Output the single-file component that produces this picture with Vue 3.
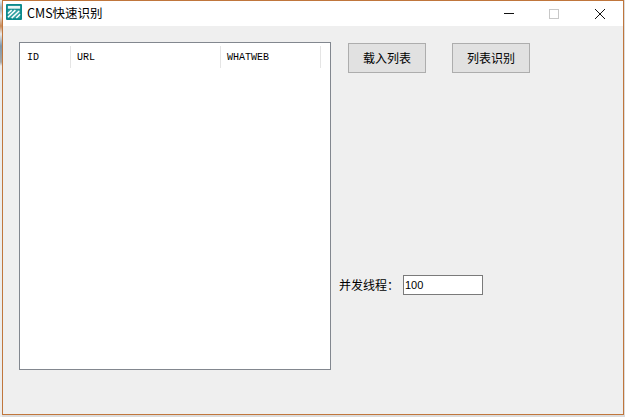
<script setup>
const columns = [
  { label: 'ID', width: 50 },
  { label: 'URL', width: 150 },
  { label: 'WHATWEB', width: 100 },
]
</script>

<template>
  <div class="screen">
    <div class="window">
      <header class="titlebar">
        <svg class="logo" width="16" height="16" viewBox="0 0 17 17">
          <rect x="0" y="0" width="17" height="17" rx="1" fill="#0b8a8c" />
          <rect x="2" y="2" width="13" height="3" fill="#e9f6f6" />
          <rect x="2" y="6" width="13" height="9" fill="#35a3a4" />
          <path d="M2 10 L6 6.5 M2 14 L10 6.5 M6 15 L14 7.5 M11 15 L15 11" stroke="#fff" stroke-width="1.5" fill="none" />
        </svg>
        <span class="title">CMS快速识别</span>
        <div class="controls">
          <span class="ctl"><i class="min"></i></span>
          <span class="ctl"><i class="max"></i></span>
          <span class="ctl">
            <svg width="12" height="12" viewBox="0 0 12 12">
              <path d="M1 1 L11 11 M11 1 L1 11" stroke="#111" stroke-width="1" fill="none" />
            </svg>
          </span>
        </div>
      </header>
      <main class="body">
        <section class="table">
          <div class="thead">
            <div v-for="c in columns" :key="c.label" class="th" :style="{ width: c.width + 'px' }">{{ c.label }}</div>
          </div>
        </section>
        <aside class="side">
          <div class="buttons">
            <button class="btn">载入列表</button>
            <button class="btn">列表识别</button>
          </div>
          <div class="thread">
            <span class="label">并发线程：</span>
            <input class="input" value="100" />
          </div>
        </aside>
      </main>
    </div>
  </div>
</template>

<style scoped>
.screen {
  width: 625px;
  height: 417px;
  box-sizing: border-box;
  padding: 0 1px 1px 2px;
  background:
    linear-gradient(to bottom, #f0f0f0 0, #9db0bd 8px, #e2e2e2 16px, #c98b5a 26px, #e9e9e9 34px, #7f98ad 46px, #a8a8a8 62px, #ececec 66px) left top / 2px 100% no-repeat,
    #dcdcdc;
  overflow: hidden;
}
.window {
  height: 415px;
  box-sizing: border-box;
  border: 1px solid #c0763c;
  display: flex;
  flex-direction: column;
  background: #efefef;
}
.titlebar {
  height: 25px;
  flex: none;
  background: #fff;
  display: flex;
  align-items: center;
  padding-left: 3px;
}
.logo {
  flex: none;
  margin-bottom: 3px;
}
.title {
  margin-left: 5px;
  padding-bottom: 3px;
  font: 12.5px "Noto Sans CJK SC", "Liberation Sans", sans-serif;
  color: #000;
}
.controls {
  margin-left: auto;
  display: flex;
}
.ctl {
  width: 46px;
  height: 25px;
  display: flex;
  align-items: center;
  justify-content: center;
}
.min {
  width: 10px;
  height: 1px;
  margin-left: 2px;
  background: #111;
}
.max {
  width: 8px;
  height: 8px;
  border: 1px solid #c8c8c8;
}
.body {
  flex: 1;
  display: flex;
  padding: 16px 0 0 16px;
}
.table {
  width: 312px;
  height: 328px;
  box-sizing: border-box;
  border: 1px solid #82878f;
  background: #fff;
  padding: 3px 0 0 1px;
  flex: none;
}
.thead {
  display: flex;
  height: 22px;
}
.th {
  box-sizing: border-box;
  border-right: 1px solid #e5e5e5;
  padding: 1px 0 0 6px;
  font: 10px/22px "Liberation Mono", monospace;
  color: #000;
}
.side {
  flex: 1;
  display: flex;
  flex-direction: column;
  padding-left: 8px;
}
.buttons {
  display: flex;
  gap: 26px;
  padding: 1px 0 0 9px;
}
.btn {
  width: 78px;
  height: 30px;
  box-sizing: border-box;
  border: 1px solid #adadad;
  background: #e1e1e1;
  color: #000;
  padding: 0 0 1px;
  font: 12px "Noto Sans CJK SC", sans-serif;
}
.thread {
  display: flex;
  align-items: center;
  margin-top: 202px;
}
.label {
  width: 64px;
  font: 12px/20px "Noto Sans CJK SC", sans-serif;
  color: #000;
}
.input {
  width: 80px;
  height: 20px;
  box-sizing: border-box;
  border: 1px solid #7a7a7a;
  padding: 0 1px;
  background: #fff;
  color: #000;
  font: 11px "Liberation Sans", sans-serif;
  outline: none;
}
</style>

<style>
html, body { margin: 0; }
</style>
